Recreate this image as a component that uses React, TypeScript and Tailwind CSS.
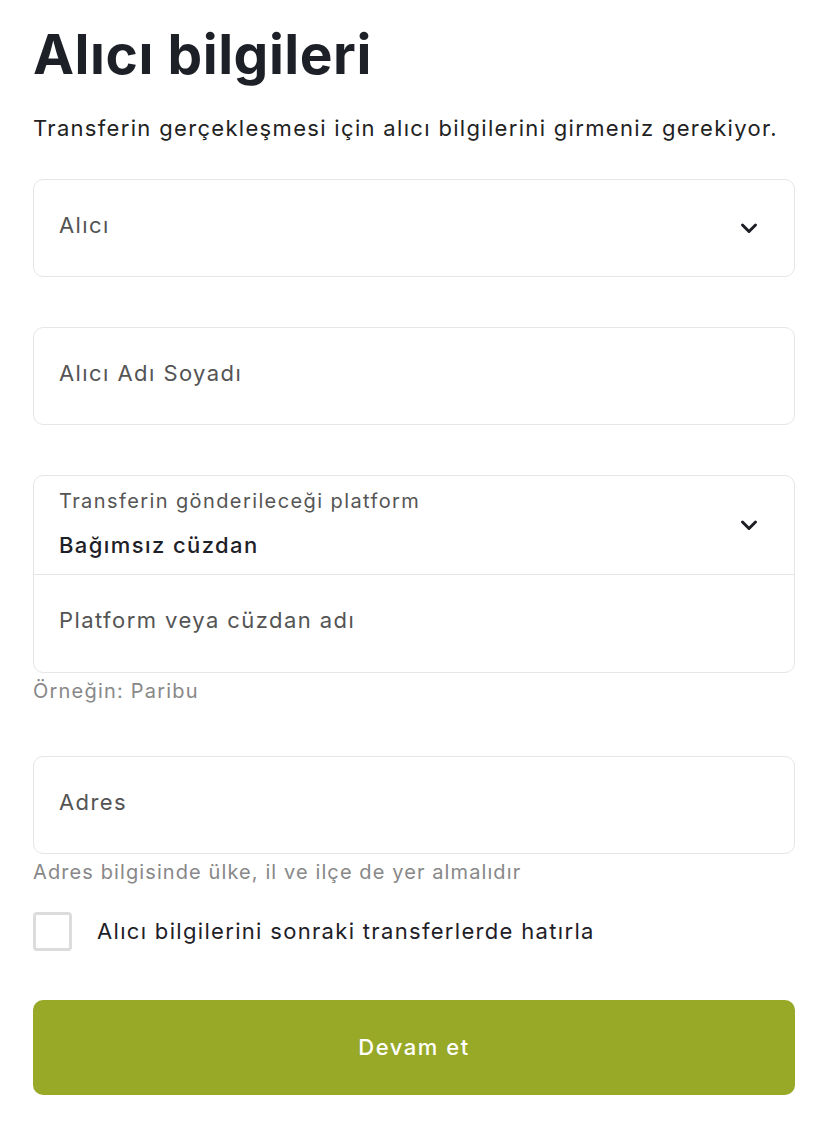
import React, { useState } from 'react';

function Chevron() {
  return (
    <svg width="18" height="12" viewBox="0 0 18 12" fill="none" className="shrink-0">
      <path d="M2.5 3l6.5 6.5L15.5 3" stroke="#1d1f25" strokeWidth="3" strokeLinecap="round" strokeLinejoin="round" />
    </svg>
  );
}

function Field({ label, chevron }: { label: string; chevron?: boolean }) {
  return (
    <div className="flex h-[98px] items-center justify-between rounded-[10px] border border-[#e6e6e6] pl-[25px] pr-[36px]">
      <span className="mb-[6px] text-[22px] tracking-[0.065em] text-[#545454]">{label}</span>
      {chevron && <Chevron />}
    </div>
  );
}

export default function App() {
  const [remember, setRemember] = useState(false);

  return (
    <div className="min-h-screen bg-white pl-[33px] pr-[32px] pt-[24px] pb-[40px] font-['Inter',sans-serif]">
      <h1 className="text-[55px] font-bold leading-[60px] tracking-[0.01em] text-[#1e2027]">Alıcı bilgileri</h1>
      <p className="mt-[30px] text-[22px] leading-[28px] tracking-[0.06em] text-[#222]">
        Transferin gerçekleşmesi için alıcı bilgilerini girmeniz gerekiyor.
      </p>

      <div className="mt-[37px]">
        <Field label="Alıcı" chevron />
      </div>
      <div className="mt-[50px]">
        <Field label="Alıcı Adı Soyadı" />
      </div>

      <div className="mt-[50px] rounded-[10px] border border-[#e6e6e6]">
        <div className="flex h-[99px] items-center justify-between border-b border-[#e6e6e6] pl-[25px] pr-[36px]">
          <div className="mb-[4px] flex flex-col">
            <span className="text-[20px] leading-[24px] tracking-[0.07em] text-[#555]">Transferin gönderileceği platform</span>
            <span className="mt-[20px] text-[22px] font-medium leading-[24px] tracking-[0.064em] text-[#1e2027]">Bağımsız cüzdan</span>
          </div>
          <Chevron />
        </div>
        <div className="flex h-[97px] items-center pl-[25px]">
          <span className="mb-[6px] text-[22px] tracking-[0.065em] text-[#545454]">Platform veya cüzdan adı</span>
        </div>
      </div>
      <p className="mt-[6px] text-[20px] leading-[24px] tracking-[0.06em] text-[#888]">Örneğin: Paribu</p>

      <div className="mt-[53px]">
        <Field label="Adres" />
      </div>
      <p className="mt-[6px] text-[20px] leading-[24px] tracking-[0.055em] text-[#888]">Adres bilgisinde ülke, il ve ilçe de yer almalıdır</p>

      <label className="mt-[28px] flex cursor-pointer items-center gap-[25px]">
        <span
          onClick={() => setRemember(!remember)}
          className="h-[39px] w-[39px] shrink-0 rounded-[4px] border-[3px] border-[#dcdcdc] bg-white"
        />
        <span className="text-[22px] tracking-[0.06em] text-[#1e2027]">Alıcı bilgilerini sonraki transferlerde hatırla</span>
      </label>

      <button
        type="button"
        className="mt-[49px] flex h-[95px] w-full items-center justify-center rounded-[10px] bg-[#97a927] text-[22px] font-medium tracking-[0.07em] text-white"
      >
        Devam et
      </button>
    </div>
  );
}
